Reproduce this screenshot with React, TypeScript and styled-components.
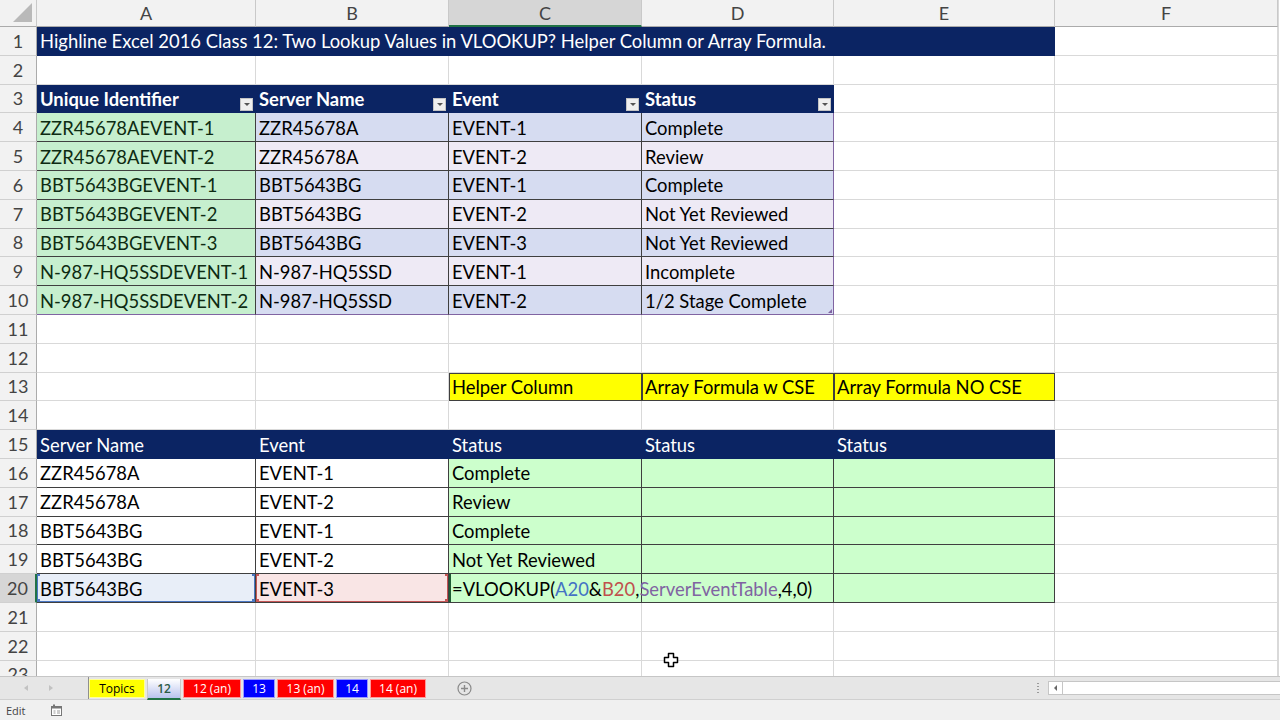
import React from 'react';
import styled, { createGlobalStyle, css } from 'styled-components';

const NAVY = '#0b2463';
const PURPLE = '#8064a2';
const LINE = '#3f3f3f';
const GRID = '#d9d9d9';

const GlobalStyle = createGlobalStyle`
  html, body {
    margin: 0;
    padding: 0;
    background: #fff;
  }
  body {
    font-family: Lato, "Open Sans", sans-serif;
    overflow: hidden;
  }
`;

const Window = styled.div`
  position: relative;
  width: 1280px;
  height: 720px;
  display: flex;
  flex-direction: column;
  overflow: hidden;
  background: #fff;
`;

const Sheet = styled.div`
  height: 676px;
  flex: none;
  overflow: hidden;
  display: grid;
  grid-template-columns: 37px 219px 193px 193px 192px 221px 223px 2px;
  grid-template-rows: 27px repeat(23, 28.8px);
`;

const Corner = styled.div`
  background: #f2f2f2;
  border-right: 1px solid #c9c9c9;
  border-bottom: 1px solid #ababab;
  display: flex;
  align-items: flex-end;
  justify-content: flex-end;
  padding: 0 4px 4px 0;

  &::after {
    content: '';
    width: 19px;
    height: 19px;
    background: #b9b9b9;
    clip-path: polygon(100% 0, 100% 100%, 0 100%);
  }
`;

const ColHead = styled.div<{ $active?: boolean }>`
  background: ${p => (p.$active ? '#d6d6d6' : '#f2f2f2')};
  border-right: 1px solid #c9c9c9;
  border-bottom: ${p => (p.$active ? '2px solid #217346' : '1px solid #ababab')};
  color: #444;
  font-size: 18px;
  display: flex;
  align-items: center;
  justify-content: center;
`;

const RowHead = styled.div<{ $active?: boolean }>`
  background: ${p => (p.$active ? '#d6d6d6' : '#f2f2f2')};
  border-right: ${p => (p.$active ? '2px solid #217346' : '1px solid #ababab')};
  border-bottom: 1px solid #d0d0d0;
  color: #444;
  font-size: 18px;
  display: flex;
  align-items: center;
  justify-content: center;
`;

const Filler = styled.div`
  border-left: 1px solid ${GRID};
`;

type Kind =
  | 'blank'
  | 'title'
  | 'navy'
  | 'th'
  | 'key'
  | 'band'
  | 'bandAlt'
  | 'yellow'
  | 'head'
  | 'plain'
  | 'mint'
  | 'refA'
  | 'refB'
  | 'edit';

const kinds: Record<Kind, ReturnType<typeof css>> = {
  blank: css``,
  title: css`
    background: ${NAVY};
    color: #fff;
    border-color: ${NAVY};
    overflow: visible;
    z-index: 2;
  `,
  navy: css`
    background: ${NAVY};
    border-color: ${NAVY};
  `,
  th: css`
    background: ${NAVY};
    color: #fff;
    font-weight: 700;
    border-color: ${NAVY};
    justify-content: space-between;
    padding-right: 2px;
  `,
  key: css`
    background: #c6efce;
    color: #0d2b12;
    border-color: ${LINE};
  `,
  band: css`
    background: #d6dcf1;
    border-color: ${LINE};
  `,
  bandAlt: css`
    background: #eeeaf5;
    border-color: ${LINE};
  `,
  yellow: css`
    background: #ffff00;
    border-color: ${LINE};
    box-shadow: inset 1px 1px 0 ${LINE};
  `,
  head: css`
    background: ${NAVY};
    color: #fff;
    border-color: ${NAVY};
  `,
  plain: css`
    border-color: ${LINE};
  `,
  mint: css`
    background: #ccffcc;
    border-color: ${LINE};
  `,
  refA: css`
    background: #e8eef8;
    border-color: ${LINE};
  `,
  refB: css`
    background: #f9e5e5;
    border-color: ${LINE};
  `,
  edit: css`
    background: #ccffcc;
    border-color: ${LINE};
    overflow: visible;
    z-index: 2;
    box-shadow: inset 2px 0 0 #1f5c34;
  `,
};

const Cell = styled.div<{ $kind: Kind; $right?: string; $bottom?: string }>`
  position: relative;
  display: flex;
  align-items: center;
  padding: 1px 0 0 3px;
  font-size: 18.4px;
  color: #000;
  white-space: nowrap;
  overflow: hidden;
  border-right: 1px solid ${GRID};
  border-bottom: 1px solid ${GRID};
  ${p => kinds[p.$kind]}
  ${p => p.$right && `border-right-color: ${p.$right};`}
  ${p => p.$bottom && `border-bottom-color: ${p.$bottom};`}
`;

const Filter = styled.span`
  align-self: flex-end;
  margin-bottom: 1px;
  width: 13px;
  height: 13px;
  flex: none;
  box-sizing: border-box;
  background: #efefef;
  border: 1px solid #c4c4c4;
  display: flex;
  align-items: center;
  justify-content: center;

  &::after {
    content: '';
    border-left: 3px solid transparent;
    border-right: 3px solid transparent;
    border-top: 3px solid #555;
  }
`;

const Resize = styled.span`
  position: absolute;
  right: 1px;
  bottom: 1px;
  width: 4px;
  height: 4px;
  background: ${PURPLE};
  clip-path: polygon(100% 0, 100% 100%, 0 100%);
`;

const RefBox = styled.span<{ $c: string }>`
  position: absolute;
  inset: -1px 0 0 0;
  border: 1.5px solid ${p => p.$c};
  pointer-events: none;
`;

const Handle = styled.i<{ $c: string; $x: 'l' | 'r'; $y: 't' | 'b' }>`
  position: absolute;
  width: 5px;
  height: 5px;
  background: ${p => p.$c};
  ${p => (p.$x === 'l' ? 'left: -3px;' : 'right: -3px;')}
  ${p => (p.$y === 't' ? 'top: -3px;' : 'bottom: -3px;')}
`;

const Ref = styled.span<{ $c: string }>`
  color: ${p => p.$c};
`;

const TabBar = styled.div`
  height: 24px;
  flex: none;
  box-sizing: border-box;
  background: #e6e6e6;
  border-top: 1px solid #c6c6c6;
  border-bottom: 1px solid #d0d0d0;
  display: flex;
  align-items: stretch;
  font-family: "Open Sans", "Noto Sans", sans-serif;
`;

const Nav = styled.div`
  width: 89px;
  display: flex;
  align-items: center;
  gap: 21px;
  padding-left: 24px;
  box-sizing: border-box;
  border-right: 1px solid #8f8f8f;
`;

const Arrow = styled.span<{ $dir: 'l' | 'r' }>`
  width: 0;
  height: 0;
  border-top: 3px solid transparent;
  border-bottom: 3px solid transparent;
  ${p => (p.$dir === 'l' ? 'border-right: 4px solid #c2c2c2;' : 'border-left: 4px solid #c2c2c2;')}
`;

const Tabs = styled.div`
  display: flex;
  gap: 2px;
  padding-top: 2px;
  align-items: flex-start;
`;

const Tab = styled.div<{ $bg: string; $fg: string; $w: number; $active?: boolean }>`
  width: ${p => p.$w}px;
  height: 19px;
  box-sizing: border-box;
  background: ${p => p.$bg};
  color: ${p => p.$fg};
  font-size: 12px;
  display: flex;
  align-items: center;
  justify-content: center;
  border: 1px solid rgba(255, 255, 255, 0.6);
  ${p =>
    p.$active &&
    `
    height: 21px;
    border: 1px solid #c9c9c9;
    border-top: none;
    border-bottom: 2px solid #217346;
    font-weight: 600;
  `}
`;

const AddSheet = styled.div`
  margin-left: 31px;
  display: flex;
  align-items: center;
`;

const Scroller = styled.div`
  margin-left: auto;
  display: flex;
  align-items: center;
  gap: 9px;
`;

const Grip = styled.div`
  width: 2px;
  height: 12px;
  background: radial-gradient(circle, #9a9a9a 0.8px, transparent 1px) 0 0 / 2px 3px;
`;

const Track = styled.div`
  width: 232px;
  height: 14px;
  box-sizing: border-box;
  background: #fff;
  border: 1px solid #c6c6c6;
  border-right: none;
  display: flex;
`;

const TrackButton = styled.div`
  width: 13px;
  border-right: 1px solid #c6c6c6;
  display: flex;
  align-items: center;
  justify-content: center;

  &::after {
    content: '';
    border-top: 3px solid transparent;
    border-bottom: 3px solid transparent;
    border-right: 3px solid #666;
  }
`;

const StatusBar = styled.div`
  flex: 1;
  background: #f0f0f0;
  display: flex;
  align-items: center;
  gap: 24px;
  padding-left: 6px;
  font-family: "Open Sans", "Noto Sans", sans-serif;
  font-size: 11px;
  color: #444;
`;

const Pointer = styled.svg`
  position: absolute;
  left: 663px;
  top: 652px;
`;

type CellDef = { k?: Kind; t?: React.ReactNode; r?: string; b?: string; ref?: string; grip?: boolean };

const table1 = [
  ['ZZR45678AEVENT-1', 'ZZR45678A', 'EVENT-1', 'Complete'],
  ['ZZR45678AEVENT-2', 'ZZR45678A', 'EVENT-2', 'Review'],
  ['BBT5643BGEVENT-1', 'BBT5643BG', 'EVENT-1', 'Complete'],
  ['BBT5643BGEVENT-2', 'BBT5643BG', 'EVENT-2', 'Not Yet Reviewed'],
  ['BBT5643BGEVENT-3', 'BBT5643BG', 'EVENT-3', 'Not Yet Reviewed'],
  ['N-987-HQ5SSDEVENT-1', 'N-987-HQ5SSD', 'EVENT-1', 'Incomplete'],
  ['N-987-HQ5SSDEVENT-2', 'N-987-HQ5SSD', 'EVENT-2', '1/2 Stage Complete'],
];

const table2 = [
  ['ZZR45678A', 'EVENT-1', 'Complete'],
  ['ZZR45678A', 'EVENT-2', 'Review'],
  ['BBT5643BG', 'EVENT-1', 'Complete'],
  ['BBT5643BG', 'EVENT-2', 'Not Yet Reviewed'],
];

const formula = (
  <span>
    =VLOOKUP(<Ref $c="#4472c4">A20</Ref>&amp;<Ref $c="#c0504d">B20</Ref>,
    <Ref $c={PURPLE}>ServerEventTable</Ref>,4,0)
  </span>
);

const buildRows = () => {
  const rows: CellDef[][] = [];
  rows[1] = [
    { k: 'title', t: 'Highline Excel 2016 Class 12: Two Lookup Values in VLOOKUP? Helper Column or Array Formula.' },
    { k: 'navy' },
    { k: 'navy' },
    { k: 'navy' },
    { k: 'navy' },
  ];
  rows[3] = ['Unique Identifier', 'Server Name', 'Event', 'Status'].map(t => ({ k: 'th' as Kind, t }));
  table1.forEach((r, i) => {
    const last = i === table1.length - 1;
    rows[4 + i] = r.map((t, c) => ({
      k: (c === 0 ? 'key' : i % 2 === 0 ? 'band' : 'bandAlt') as Kind,
      t,
      r: c === 3 ? PURPLE : undefined,
      b: last ? PURPLE : undefined,
      grip: last && c === 3,
    }));
  });
  rows[13] = [
    {},
    {},
    { k: 'yellow', t: 'Helper Column' },
    { k: 'yellow', t: 'Array Formula w CSE' },
    { k: 'yellow', t: 'Array Formula NO CSE' },
  ];
  rows[15] = ['Server Name', 'Event', 'Status', 'Status', 'Status'].map(t => ({ k: 'head' as Kind, t }));
  table2.forEach((r, i) => {
    rows[16 + i] = [
      { k: 'plain', t: r[0] },
      { k: 'plain', t: r[1] },
      { k: 'mint', t: r[2] },
      { k: 'mint' },
      { k: 'mint' },
    ];
  });
  rows[20] = [
    { k: 'refA', t: 'BBT5643BG', ref: '#4a76c2' },
    { k: 'refB', t: 'EVENT-3', ref: '#c55656' },
    { k: 'edit', t: formula },
    { k: 'mint' },
    { k: 'mint' },
  ];
  return rows;
};

const sheetTabs = [
  { name: 'Topics', bg: '#ffff00', fg: '#000', w: 56 },
  { name: '12', bg: 'linear-gradient(#ffffff, #b9c3ee)', fg: '#2b5a45', w: 34, active: true },
  { name: '12 (an)', bg: '#ff0000', fg: '#fff', w: 58 },
  { name: '13', bg: '#0000ff', fg: '#fff', w: 32 },
  { name: '13 (an)', bg: '#ff0000', fg: '#fff', w: 57 },
  { name: '14', bg: '#0000ff', fg: '#fff', w: 32 },
  { name: '14 (an)', bg: '#ff0000', fg: '#fff', w: 56 },
];

const App = () => {
  const rows = buildRows();
  const cols = ['A', 'B', 'C', 'D', 'E', 'F'];

  return (
    <Window>
      <GlobalStyle />
      <Sheet>
        <Corner />
        {cols.map(c => (
          <ColHead key={c} $active={c === 'C'}>{c}</ColHead>
        ))}
        <Filler />
        {Array.from({ length: 23 }, (_, i) => i + 1).map(n => (
          <React.Fragment key={n}>
            <RowHead $active={n === 20}>{n}</RowHead>
            {cols.map((c, ci) => {
              const def = rows[n]?.[ci] ?? {};
              return (
                <Cell key={c} $kind={def.k ?? 'blank'} $right={def.r} $bottom={def.b}>
                  {def.t}
                  {def.k === 'th' && <Filter />}
                  {def.grip && <Resize />}
                  {def.ref && (
                    <RefBox $c={def.ref}>
                      <Handle $c={def.ref} $x="l" $y="t" />
                      <Handle $c={def.ref} $x="r" $y="t" />
                      <Handle $c={def.ref} $x="l" $y="b" />
                      <Handle $c={def.ref} $x="r" $y="b" />
                    </RefBox>
                  )}
                </Cell>
              );
            })}
            <Filler />
          </React.Fragment>
        ))}
      </Sheet>

      <TabBar>
        <Nav>
          <Arrow $dir="l" />
          <Arrow $dir="r" />
        </Nav>
        <Tabs>
          {sheetTabs.map(t => (
            <Tab key={t.name} $bg={t.bg} $fg={t.fg} $w={t.w} $active={t.active}>
              {t.name}
            </Tab>
          ))}
        </Tabs>
        <AddSheet>
          <svg width="15" height="15" viewBox="0 0 15 15">
            <circle cx="7.5" cy="7.5" r="6.5" fill="none" stroke="#8a8a8a" strokeWidth="1.2" />
            <path d="M7.5 4v7M4 7.5h7" stroke="#8a8a8a" strokeWidth="1.4" />
          </svg>
        </AddSheet>
        <Scroller>
          <Grip />
          <Track>
            <TrackButton />
          </Track>
        </Scroller>
      </TabBar>

      <StatusBar>
        <span>Edit</span>
        <svg width="13" height="13" viewBox="0 0 13 13">
          <rect x="1.5" y="2.5" width="10" height="9" fill="#fff" stroke="#777" />
          <rect x="1.5" y="2.5" width="10" height="2" fill="#777" />
          <path d="M3.5 7h2M7 7h3M3.5 9h2M7 9h3" stroke="#999" />
          <rect x="3" y="0.5" width="2" height="2" fill="#777" />
        </svg>
      </StatusBar>

      <Pointer width="16" height="16" viewBox="0 0 16 16">
        <path
          d="M5.5 1.5h5v4h4v5h-4v4h-5v-4h-4v-5h4z"
          fill="#fff"
          stroke="#000"
          strokeWidth="1.5"
          strokeLinejoin="round"
        />
      </Pointer>
    </Window>
  );
};

export default App;
